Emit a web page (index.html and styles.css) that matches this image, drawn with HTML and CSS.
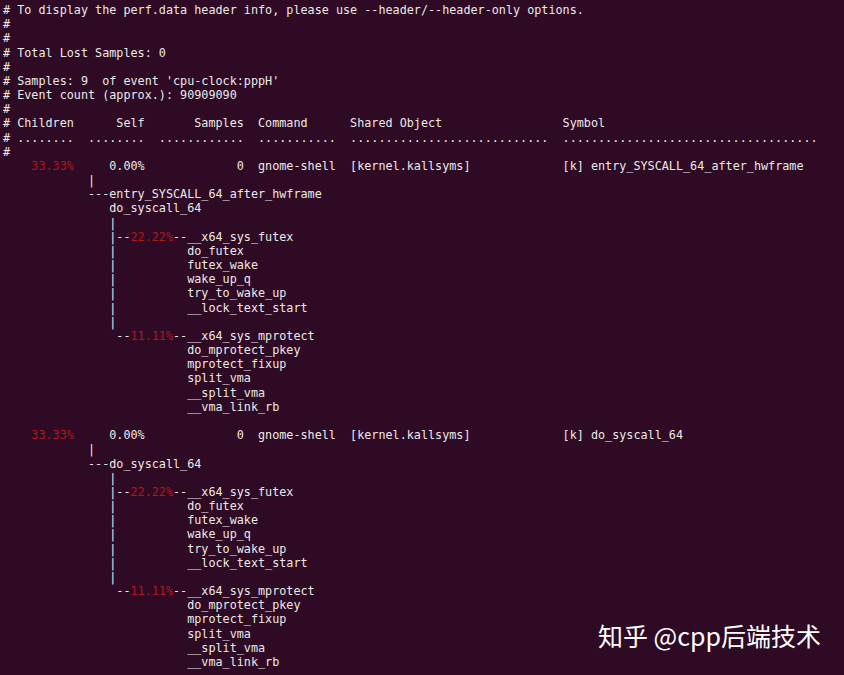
FILE: index.html
```html
<!DOCTYPE html>
<html>
<head>
<meta charset="utf-8">
<link rel="stylesheet" href="styles.css">
</head>
<body>
<div class="term">
<pre class="out"># To display the perf.data header info, please use --header/--header-only options.
#
#
# Total Lost Samples: 0
#
# Samples: 9  of event 'cpu-clock:pppH'
# Event count (approx.): 90909090
#
# Children      Self       Samples  Command      Shared Object                 Symbol
# ........  ........  ............  ...........  ............................  ....................................
#
    <span class="red">33.33%</span>     0.00%             0  gnome-shell  [kernel.kallsyms]             [k] entry_SYSCALL_64_after_hwframe
            |
            ---entry_SYSCALL_64_after_hwframe
               do_syscall_64
               |
               |--<span class="red">22.22%</span>--__x64_sys_futex
               |          do_futex
               |          futex_wake
               |          wake_up_q
               |          try_to_wake_up
               |          __lock_text_start
               |
                --<span class="red">11.11%</span>--__x64_sys_mprotect
                          do_mprotect_pkey
                          mprotect_fixup
                          split_vma
                          __split_vma
                          __vma_link_rb

    <span class="red">33.33%</span>     0.00%             0  gnome-shell  [kernel.kallsyms]             [k] do_syscall_64
            |
            ---do_syscall_64
               |
               |--<span class="red">22.22%</span>--__x64_sys_futex
               |          do_futex
               |          futex_wake
               |          wake_up_q
               |          try_to_wake_up
               |          __lock_text_start
               |
                --<span class="red">11.11%</span>--__x64_sys_mprotect
                          do_mprotect_pkey
                          mprotect_fixup
                          split_vma
                          __split_vma
                          __vma_link_rb</pre>
<div class="mark">知乎 @cpp后端技术</div>
</div>
</body>
</html>
```

FILE: styles.css
```css
html, body {
  margin: 0;
  padding: 0;
  background: #2f0a24;
}
.term {
  position: relative;
  width: 844px;
  height: 675px;
  overflow: hidden;
  background: #2f0a24;
}
.out {
  margin: 0;
  padding: 3px 0 0 3px;
  font-family: "DejaVu Sans Mono", monospace;
  font-size: 11.78px;
  line-height: 14.17px;
  color: #ebe9e6;
  white-space: pre;
}
.red {
  color: #b5171c;
}
.mark {
  position: absolute;
  left: 598px;
  top: 618px;
  font-family: "Noto Sans CJK SC", "Noto Sans", sans-serif;
  font-size: 25px;
  line-height: 34px;
  color: #ffffff;
}
```
